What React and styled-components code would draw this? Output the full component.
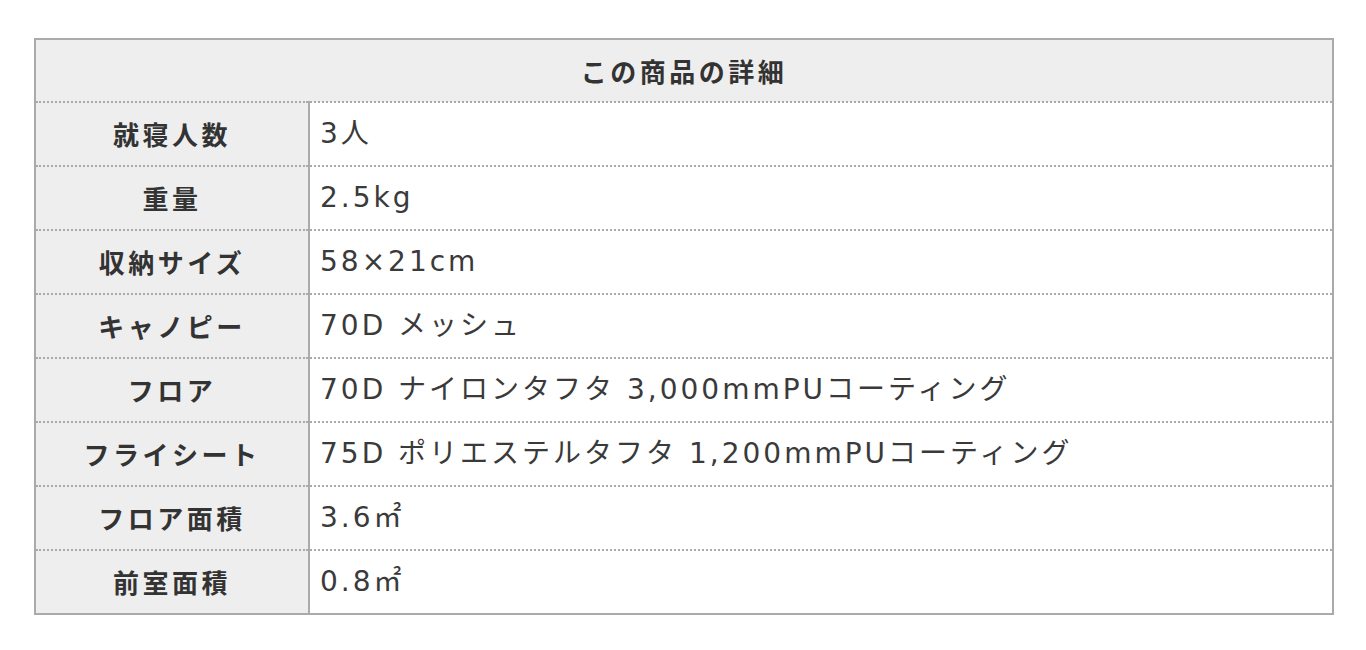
import styled, { createGlobalStyle } from "styled-components";

const GlobalStyle = createGlobalStyle`
  html, body {
    margin: 0;
    padding: 0;
    background: #fff;
  }
  body {
    font-family: "Noto Sans CJK JP", "Noto Sans", sans-serif;
    color: #333;
  }
`;

const specs = [
  ["就寝人数", "3人"],
  ["重量", "2.5kg"],
  ["収納サイズ", "58×21cm"],
  ["キャノピー", "70D メッシュ"],
  ["フロア", "70D ナイロンタフタ 3,000mmPUコーティング"],
  ["フライシート", "75D ポリエステルタフタ 1,200mmPUコーティング"],
  ["フロア面積", "3.6㎡"],
  ["前室面積", "0.8㎡"],
];

const App = () => {
  return (
    <Page>
      <GlobalStyle />
      <DetailTable>
        <thead>
          <tr>
            <HeadCell colSpan={2}>この商品の詳細</HeadCell>
          </tr>
        </thead>
        <tbody>
          {specs.map(([label, value]) => (
            <Row key={label}>
              <LabelCell>{label}</LabelCell>
              <ValueCell>{value}</ValueCell>
            </Row>
          ))}
        </tbody>
      </DetailTable>
    </Page>
  );
};

const Page = styled.div`
  padding: 38px 32px 30px 34px;
`;

const DetailTable = styled.table`
  width: 1300px;
  border-collapse: collapse;
  border: 2px solid #aaa;
  font-size: 26px;
  letter-spacing: 3.5px;
  line-height: 1;
`;

const HeadCell = styled.th`
  height: 61px;
  padding: 0;
  background-color: #eee;
  font-weight: 700;
  text-align: center;
  border-bottom: 2px dotted #aaa;
`;

const Row = styled.tr`
  &:not(:last-child) td {
    border-bottom: 2px dotted #aaa;
  }
`;

const LabelCell = styled.td`
  width: 272px;
  height: 62px;
  padding: 0;
  background-color: #eee;
  font-weight: 700;
  text-align: center;
  border-right: 2px solid #aaa;
`;

const ValueCell = styled.td`
  height: 62px;
  padding: 0 0 0 10px;
  background-color: #fff;
  text-align: left;
  font-family: "DejaVu Sans", "Noto Sans CJK JP", sans-serif;
  font-size: 28px;
  font-weight: 400;
  letter-spacing: 3px;
  color: #3a3a3a;
`;

export default App;
